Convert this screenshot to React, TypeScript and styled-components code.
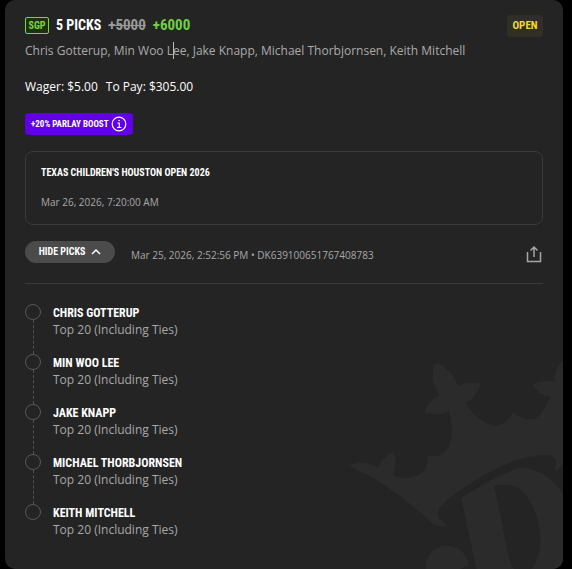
import React from 'react';
import styled, { createGlobalStyle } from 'styled-components';

const display = '"Saira Extra Condensed", "Roboto Condensed", "Liberation Sans Narrow", "Liberation Sans", sans-serif';

const GlobalStyle = createGlobalStyle`
  *, *::before, *::after { box-sizing: border-box; }
  body {
    margin: 0;
    background: #000;
    color: #fff;
    font: 12px/18px "Open Sans", "Noto Sans", sans-serif;
  }
  h2, h3, p, ol { margin: 0; padding: 0; }
  button { border: 0; padding: 0; color: inherit; cursor: pointer; }
`;

const Card = styled.article`
  position: relative;
  overflow: hidden;
  min-height: 100vh;
  margin: 0 9px 0 5px;
  padding: 15px 20px 12px;
  border-radius: 10px;
  background: #242424;
`;

const Content = styled.div`
  position: relative;
`;

const Watermark = styled.svg`
  position: absolute;
  right: 0;
  bottom: 0;
  width: 231px;
  height: 219px;
`;

const Header = styled.header`
  display: flex;
  align-items: flex-start;
  justify-content: space-between;
  height: 22px;
`;

const Summary = styled.div`
  display: flex;
  align-items: center;
  gap: 7px;
  font: 700 15px/20px ${display};
`;

const SgpTag = styled.span`
  width: 24px;
  border: 1px solid #7bd63c;
  border-radius: 2px;
  background: #1b3111;
  color: #7bd63c;
  text-align: center;
  font: 700 10px/15px ${display};
`;

const Title = styled.h2`
  font: 700 14px/20px ${display};
`;

const OldOdds = styled.s`
  color: #9a9a9a;
`;

const Odds = styled.span`
  color: #6fd044;
`;

const Status = styled.span`
  width: 36px;
  border-radius: 4px;
  background: #302f23;
  color: #f0d935;
  text-align: center;
  font: 700 11px/22px ${display};
`;

const Players = styled.p`
  margin-top: 5px;
  color: #ababab;
`;

const Caret = styled.span`
  position: relative;

  &::after {
    content: '';
    position: absolute;
    top: 0;
    left: 0;
    width: 1px;
    height: 17px;
    background: #bdbdbd;
  }
`;

const Stakes = styled.div`
  display: flex;
  gap: 8px;
  margin-top: 18px;
`;

const Boost = styled.button`
  display: flex;
  align-items: center;
  justify-content: space-between;
  width: 108px;
  height: 22px;
  margin-top: 17px;
  padding: 0 6px;
  border-radius: 4px;
  background: #6100e8;
  white-space: nowrap;
  font: 700 9px/22px ${display};
`;

const EventBox = styled.section`
  margin-top: 16px;
  padding: 13px 15px 14px;
  border: 1px solid #3a3a3a;
  border-radius: 8px;
`;

const EventName = styled.h3`
  font: 700 10px/16px ${display};
`;

const Meta = styled.p`
  color: #a8a8a8;
  font-size: 10px;
  line-height: 16px;
`;

const EventDate = styled(Meta)`
  margin-top: 13px;
`;

const Footer = styled.div`
  display: flex;
  align-items: center;
  gap: 16px;
  margin-top: 16px;
  padding-bottom: 20px;
  border-bottom: 1px solid #3a3a3a;
`;

const Toggle = styled.button`
  display: flex;
  align-items: center;
  justify-content: center;
  gap: 6px;
  width: 90px;
  height: 22px;
  border-radius: 11px;
  background: #4b4b4b;
  font: 700 10px/22px ${display};
`;

const Receipt = styled(Meta)`
  flex: 1;
  padding-top: 6px;
`;

const Share = styled.button`
  display: flex;
  padding-top: 3px;
  background: none;
  color: #a6a6a6;
`;

const Picks = styled.ol`
  margin-top: 20px;
  list-style: none;
`;

const Pick = styled.li`
  display: flex;
  gap: 12px;
  min-height: 50px;
`;

const Rail = styled.div`
  display: flex;
  flex-direction: column;
  align-items: center;
  width: 16px;

  &::before {
    content: '';
    width: 16px;
    height: 16px;
    border: 1px solid #585858;
    border-radius: 50%;
  }

  &::after {
    content: '';
    flex: 1;
    border-left: 1px dashed #505050;
  }

  ${Pick}:last-child &::after {
    display: none;
  }
`;

const PickName = styled.h3`
  font: 700 12px/18px ${display};
`;

const Market = styled.p`
  color: #a8a8a8;
  line-height: 16px;
`;

const picks = ['Chris Gotterup', 'Min Woo Lee', 'Jake Knapp', 'Michael Thorbjornsen', 'Keith Mitchell'];

function Crown() {
  return (
    <Watermark viewBox="0 0 693 657" fill="#2b2b2b" aria-hidden="true">
      <path d="M51 347 Q89 327 138 353 Q152 319 184 307 Q200 341 182 376 Q225 392 260 375 Q291 357 285 317 Q321 326 343 301 Q371 263 351 182 Q316 202 278 187 Q287 151 323 135 Q293 94 305 44 Q315 35 337 51 Q364 72 378 108 Q407 92 447 102 Q436 142 401 158 Q434 216 489 227 Q530 219 543 187 Q569 212 604 207 Q633 197 655 140 Q622 139 601 103 Q630 88 668 96 Q667 52 693 32 V340 L673 365 Q665 356 672 343 Q675 318 645 316 Q557 313 438 386 Q313 461 317 493 Q321 514 347 525 Q316 535 297 516 Q174 400 51 347Z" />
      <path fillRule="evenodd" d="M388 444 Q512 366 562 353 Q642 355 693 431 V657 H433Z M487 408 Q553 394 583 437 Q622 490 625 563 Q625 628 597 657 H549 Q537 650 533 633Z" />
      <path d="M281 657 C278 565 399 567 411 647 Q397 646 386 657Z" />
    </Watermark>
  );
}

export default function App() {
  return (
    <>
      <GlobalStyle />
      <Card>
        <Crown />
        <Content>
          <Header>
            <Summary>
              <SgpTag>SGP</SgpTag>
              <Title>5 PICKS</Title>
              <OldOdds>+5000</OldOdds>
              <Odds>+6000</Odds>
            </Summary>
            <Status>OPEN</Status>
          </Header>
          <Players>
            Chris Gotterup, Min Woo L<Caret />ee, Jake Knapp, Michael Thorbjornsen, Keith Mitchell
          </Players>
          <Stakes>
            <span>Wager: $5.00</span>
            <span>To Pay: $305.00</span>
          </Stakes>
          <Boost type="button">
            +20% PARLAY BOOST
            <svg width="16" height="16" viewBox="0 0 16 16" fill="none" stroke="#fff" aria-hidden="true">
              <circle cx="8" cy="8" r="6.8" strokeWidth="1.2" />
              <path d="M6.5 7H8.3V11.3M6 11.5H10.3M7.3 4.5H8.8" strokeWidth="1.2" />
            </svg>
          </Boost>
          <EventBox>
            <EventName>TEXAS CHILDREN'S HOUSTON OPEN 2026</EventName>
            <EventDate>Mar 26, 2026, 7:20:00 AM</EventDate>
          </EventBox>
          <Footer>
            <Toggle type="button" aria-expanded="true">
              HIDE PICKS
              <svg width="10" height="8" viewBox="0 0 10 8" fill="none" stroke="#fff" strokeWidth="1.5" aria-hidden="true">
                <path d="M1 6 5 2 9 6" />
              </svg>
            </Toggle>
            <Receipt>Mar 25, 2026, 2:52:56 PM • DK639100651767408783</Receipt>
            <Share type="button" aria-label="Share">
              <svg width="18" height="18" viewBox="0 0 18 18" fill="none" stroke="currentColor" strokeWidth="1.5" aria-hidden="true">
                <path d="M2.5 7V16.5H15.5V7M9 12V2M5.5 5.5 9 2 12.5 5.5" />
              </svg>
            </Share>
          </Footer>
          <Picks>
            {picks.map((name) => (
              <Pick key={name}>
                <Rail />
                <div>
                  <PickName>{name.toUpperCase()}</PickName>
                  <Market>Top 20 (Including Ties)</Market>
                </div>
              </Pick>
            ))}
          </Picks>
        </Content>
      </Card>
    </>
  );
}
